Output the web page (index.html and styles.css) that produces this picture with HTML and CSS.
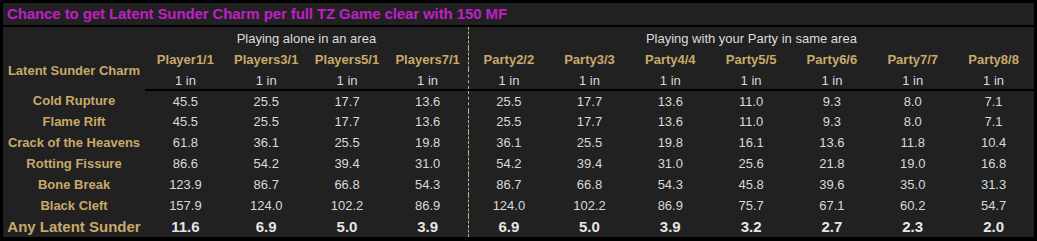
FILE: index.html
```html
<!DOCTYPE html>
<html>
<head>
<meta charset="utf-8">
<link rel="stylesheet" href="styles.css">
</head>
<body>
<div class="title">Chance to get Latent Sunder Charm per full TZ Game clear with 150 MF</div>
<table class="grid">
  <colgroup>
    <col class="c-name">
    <col><col><col><col>
    <col><col><col><col><col><col><col>
  </colgroup>
  <thead>
    <tr class="h1">
      <th></th>
      <th colspan="4" class="grp">Playing alone in an area</th>
      <th colspan="7" class="grp sep">Playing with your Party in same area</th>
    </tr>
    <tr class="h2">
      <th rowspan="2" class="name">Latent Sunder Charm</th>
      <th>Player1/1</th><th>Players3/1</th><th>Players5/1</th><th>Players7/1</th>
      <th class="sep">Party2/2</th><th>Party3/3</th><th>Party4/4</th><th>Party5/5</th><th>Party6/6</th><th>Party7/7</th><th>Party8/8</th>
    </tr>
    <tr class="h3">
      <td>1 in</td><td>1 in</td><td>1 in</td><td>1 in</td>
      <td class="sep">1 in</td><td>1 in</td><td>1 in</td><td>1 in</td><td>1 in</td><td>1 in</td><td>1 in</td>
    </tr>
  </thead>
  <tbody>
    <tr><th>Cold Rupture</th><td>45.5</td><td>25.5</td><td>17.7</td><td>13.6</td><td class="sep">25.5</td><td>17.7</td><td>13.6</td><td>11.0</td><td>9.3</td><td>8.0</td><td>7.1</td></tr>
    <tr><th>Flame Rift</th><td>45.5</td><td>25.5</td><td>17.7</td><td>13.6</td><td class="sep">25.5</td><td>17.7</td><td>13.6</td><td>11.0</td><td>9.3</td><td>8.0</td><td>7.1</td></tr>
    <tr><th>Crack of the Heavens</th><td>61.8</td><td>36.1</td><td>25.5</td><td>19.8</td><td class="sep">36.1</td><td>25.5</td><td>19.8</td><td>16.1</td><td>13.6</td><td>11.8</td><td>10.4</td></tr>
    <tr><th>Rotting Fissure</th><td>86.6</td><td>54.2</td><td>39.4</td><td>31.0</td><td class="sep">54.2</td><td>39.4</td><td>31.0</td><td>25.6</td><td>21.8</td><td>19.0</td><td>16.8</td></tr>
    <tr><th>Bone Break</th><td>123.9</td><td>86.7</td><td>66.8</td><td>54.3</td><td class="sep">86.7</td><td>66.8</td><td>54.3</td><td>45.8</td><td>39.6</td><td>35.0</td><td>31.3</td></tr>
    <tr><th>Black Cleft</th><td>157.9</td><td>124.0</td><td>102.2</td><td>86.9</td><td class="sep">124.0</td><td>102.2</td><td>86.9</td><td>75.7</td><td>67.1</td><td>60.2</td><td>54.7</td></tr>
    <tr class="total"><th>Any Latent Sunder</th><td>11.6</td><td>6.9</td><td>5.0</td><td>3.9</td><td class="sep">6.9</td><td>5.0</td><td>3.9</td><td>3.2</td><td>2.7</td><td>2.3</td><td>2.0</td></tr>
  </tbody>
</table>
</body>
</html>
```

FILE: styles.css
```css
html, body {
  margin: 0;
  background: #000;
}
body {
  padding: 3px;
  font-family: "Liberation Sans", Arial, sans-serif;
}
.title {
  width: 1027px;
  height: 22px;
  line-height: 22px;
  padding-left: 4px;
  background: #212121;
  color: #c01fc6;
  font-size: 15px;
  font-weight: bold;
  letter-spacing: -0.1px;
  margin-bottom: 2px;
}
.grid {
  width: 1031px;
  border-collapse: collapse;
  table-layout: fixed;
  background: #212121;
  font-size: 13px;
}
.c-name {
  width: 142px;
}
.grid th, .grid td {
  padding: 0;
  text-align: center;
  white-space: nowrap;
}
.grid td {
  color: #d9d9d9;
  font-weight: normal;
}
.grid th {
  color: #c9a96a;
  font-weight: bold;
}
.grid th.name {
  padding-top: 2px;
}
.grid th.grp {
  color: #dcdcdc;
  font-weight: normal;
}
thead tr {
  height: 21px;
}
.h1 th {
  padding-top: 1px;
}
.h2 th {
  padding-top: 2px;
}
.h3 td {
  padding-top: 2px;
  border-bottom: 2px solid #000;
}
tbody tr {
  height: 21px;
}
tbody th, tbody td {
  padding-top: 2px;
}
.grid .sep {
  border-left: 1px dashed #c2ad7e;
}
.total th, .total td {
  font-size: 15px;
  font-weight: bold;
}
.total td {
  color: #e6e6e6;
}
```
